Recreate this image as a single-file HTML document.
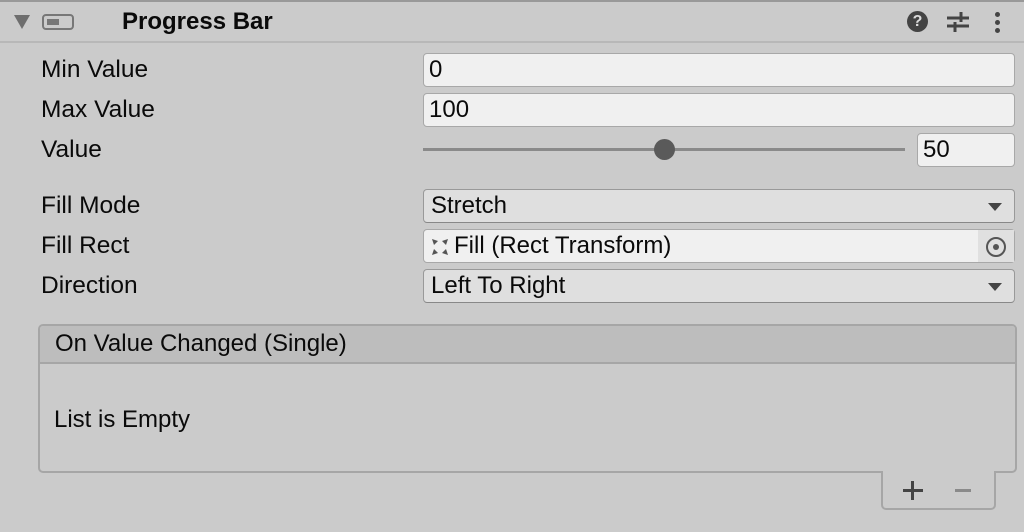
<!DOCTYPE html>
<html><head><style>
*{box-sizing:border-box}
body{margin:0;width:1024px;height:532px;background:#cbcbcb;position:relative;overflow:hidden;font-family:"Liberation Sans",sans-serif;color:#0a0a0a}
.a{position:absolute}
.lbl{position:absolute;left:41px;font-size:24.5px;line-height:34px}
.inp{position:absolute;left:423px;width:592px;height:34px;background:#f0f0f0;border:1px solid #a8a8a8;border-radius:4px;font-size:24px;line-height:32px;padding-left:5px}
.dd{position:absolute;left:423px;width:592px;height:34px;background:#dfdfdf;border:1px solid #999;border-bottom-color:#888;border-radius:4px;font-size:24px;line-height:32px;padding-left:7px}
.tri{position:absolute;right:12px;top:13px;width:0;height:0;border-left:7px solid transparent;border-right:7px solid transparent;border-top:8px solid #444}
</style></head><body>
<div class="a" style="left:0;top:0;width:1024px;height:2px;background:#999"></div>
<div class="a" style="left:0;top:41px;width:1024px;height:2px;background:#b8b8b8"></div>
<div class="a" style="left:14px;top:15px;width:0;height:0;border-left:8px solid transparent;border-right:8px solid transparent;border-top:14px solid #6e6e6e"></div>
<div class="a" style="left:42px;top:14px;width:32px;height:16px;border:2px solid #777;border-radius:4px"></div>
<div class="a" style="left:47px;top:19px;width:12px;height:6px;background:#777"></div>
<div class="a" style="left:122px;top:6px;font-size:24px;font-weight:bold;line-height:32px">Progress Bar</div>
<div class="a" style="left:907px;top:11px;width:21px;height:21px;border-radius:50%;background:#444;color:#ddd;font-weight:bold;font-size:16px;line-height:21px;text-align:center">?</div>
<svg class="a" style="left:945px;top:10px" width="26" height="24"><g stroke="#444" stroke-width="3"><line x1="2" y1="8" x2="24" y2="8"/><line x1="2" y1="16" x2="24" y2="16"/><line x1="16" y1="2" x2="16" y2="12"/><line x1="10" y1="12" x2="10" y2="22"/></g></svg>
<div class="a" style="left:995px;top:12px;width:5px;height:5px;border-radius:50%;background:#444;box-shadow:0 8px 0 #444,0 16px 0 #444"></div>

<div class="lbl" style="top:53px">Min Value</div>
<div class="inp" style="top:53px">0</div>
<div class="lbl" style="top:93px">Max Value</div>
<div class="inp" style="top:93px">100</div>
<div class="lbl" style="top:133px">Value</div>
<div class="a" style="left:423px;top:148px;width:482px;height:3px;background:#8a8a8a"></div>
<div class="a" style="left:654px;top:139px;width:21px;height:21px;border-radius:50%;background:#5a5a5a"></div>
<div class="inp" style="top:133px;left:917px;width:98px">50</div>

<div class="lbl" style="top:189px">Fill Mode</div>
<div class="dd" style="top:189px">Stretch<div class="tri"></div></div>
<div class="lbl" style="top:229px">Fill Rect</div>
<div class="inp" style="top:229px;padding-left:30px">Fill (Rect Transform)
<div class="a" style="right:0;top:0;width:36px;height:32px;background:#e0e0e0"></div>
<div class="a" style="right:8px;top:7px;width:20px;height:20px;border:2px solid #555;border-radius:50%"></div>
<div class="a" style="right:15px;top:14px;width:6px;height:6px;border-radius:50%;background:#555"></div>
<svg class="a" style="left:7px;top:8px" width="18" height="18"><g fill="#555"><path d="M1 1L7 3L3 7Z"/><path d="M17 1L11 3L15 7Z"/><path d="M1 17L7 15L3 11Z"/><path d="M17 17L11 15L15 11Z"/></g></svg>
</div>
<div class="lbl" style="top:269px">Direction</div>
<div class="dd" style="top:269px">Left To Right<div class="tri"></div></div>

<div class="a" style="left:38px;top:324px;width:979px;height:149px;border:2px solid #a6a6a6;border-radius:5px"></div>
<div class="a" style="left:40px;top:326px;width:975px;height:38px;background:#bdbdbd;border-bottom:2px solid #a6a6a6;border-radius:4px 4px 0 0;font-size:24px;line-height:36px;padding-left:15px">On Value Changed (Single)</div>
<div class="a" style="left:54px;top:403px;font-size:24px;line-height:34px">List is Empty</div>
<div class="a" style="left:881px;top:471px;width:115px;height:39px;background:#cbcbcb;border:2px solid #a6a6a6;border-top:none;border-radius:0 0 5px 5px"></div>
<div class="a" style="left:903px;top:489px;width:20px;height:3px;background:#444"></div>
<div class="a" style="left:911px;top:481px;width:3px;height:19px;background:#444"></div>
<div class="a" style="left:955px;top:489px;width:16px;height:3px;background:#8a8a8a"></div>
</body></html>
